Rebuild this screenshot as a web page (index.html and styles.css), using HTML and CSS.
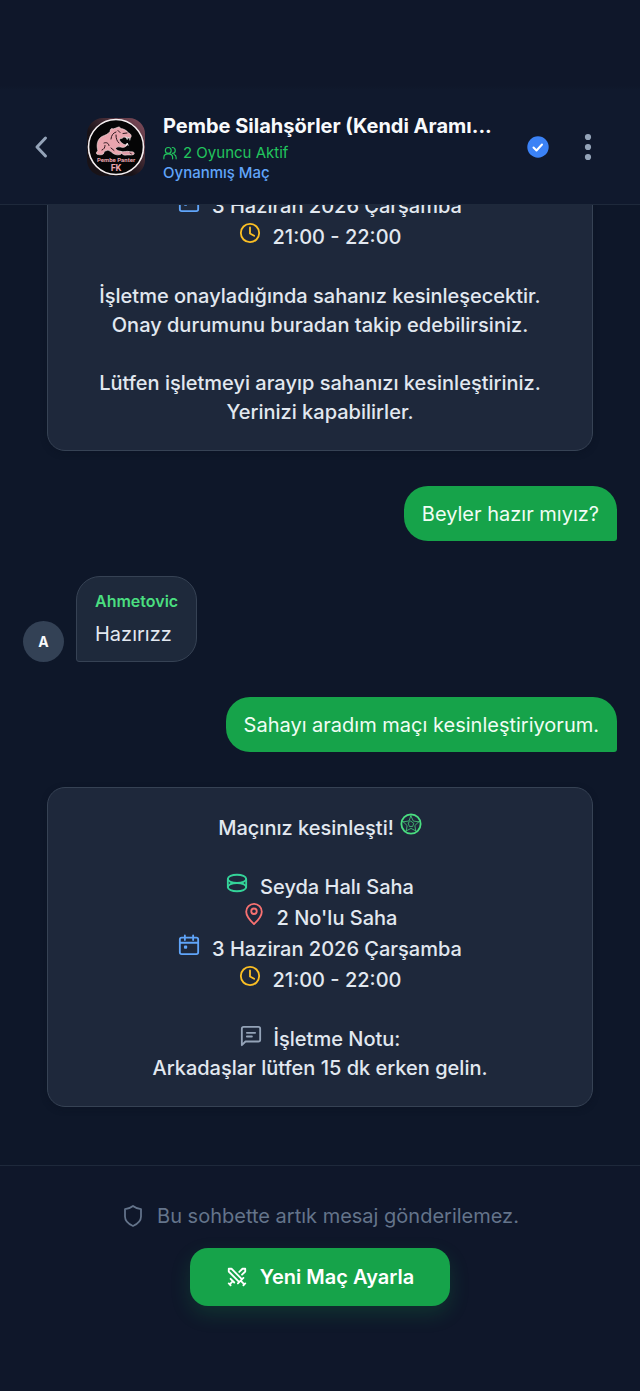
FILE: index.html
```html
<!DOCTYPE html>
<html lang="tr">
<head>
<meta charset="utf-8">
<meta name="viewport" content="width=device-width, initial-scale=1">
<title>Pembe Silahşörler</title>
<link rel="stylesheet" href="styles.css">
</head>
<body>
<svg class="sprite" aria-hidden="true">
  <symbol id="calendar" viewBox="0 0 24 24"><rect x="2" y="4" width="20" height="18" rx="2"/><path d="M2 9.500h20M7.500 1.500v5M16.500 1.500v5"/><rect x="7.500" y="13.500" width="1.500" height="1.500"/></symbol>
  <symbol id="clock" viewBox="0 0 24 24"><circle cx="12" cy="12" r="10"/><path d="M12 6v6.500l4.500 2.500"/></symbol>
  <symbol id="stadium" viewBox="0 0 24 24"><ellipse cx="12" cy="7.500" rx="10" ry="4.500"/><ellipse cx="12" cy="16.500" rx="10" ry="4.500"/><path d="M2 7.500v9M22 7.500v9"/></symbol>
  <symbol id="pin" viewBox="0 0 24 24"><path d="M20.500 9.500c0 5.500-8.500 13.500-8.500 13.500S3.500 15 3.500 9.500a8.500 8.500 0 0 1 17 0z"/><circle cx="12" cy="9" r="3"/></symbol>
  <symbol id="note" viewBox="0 0 24 24"><path d="M2 22V4a2 2 0 0 1 2-2h16a2 2 0 0 1 2 2v12a2 2 0 0 1-2 2H6zM7.500 8.500h9M7.500 12.500h5.500"/></symbol>
</svg>
<div class="app">
  <header class="header">
    <button class="icon-button" type="button" aria-label="Geri">
      <svg class="back" viewBox="0 0 14 24"><path d="M11.500 3L3 12l8.500 9"/></svg>
    </button>
    <svg class="logo" viewBox="0 0 58 58" role="img" aria-label="Pembe Panter FK">
      <defs><linearGradient id="plate" x1="0" y1="1" x2="1" y2="0"><stop offset=".4" stop-color="#181217"/><stop offset="1" stop-color="#875060"/></linearGradient></defs>
      <rect width="58" height="58" fill="url(#plate)"/>
      <circle cx="29" cy="29" r="27.500" fill="#050506" stroke="#f5eff1" stroke-width="1.600"/>
      <path d="M10 36c-1.200-1-.5-2.500 1-3-2-6-.5-12 4-14.500 3-1.500 6-2 8-5 .2-2.500 1.500-3.500 3-2.500 2-1 4-1 5.500-2 1.200-.2 2 .6 2 1.600 3 .2 6 1.500 8 4.400 2 .5 3 2 2.600 3.800-.4 1.200-1.300 1.600-2.300 1.300l-5-1.100c-1.500 1.500-3 2-4.500 1.500 0 3 2 4 4 5.500 1.500.8 3 .8 4.500.2-1.500 2.800-4.300 3.800-7.300 2.800-2.500-.5-4 .3-5 1.500 1 1.500 2.500 2.300 4 2.500 2.500.3 3 3 .5 3.600-3.500.8-6.500-.3-9-3l-3-1.500-3.500 1.200-1.200 2.700c-2 1.200-4.800 1-6.300 0z" fill="#e9a5ae" stroke="#f5e9ea" stroke-width=".6"/>
      <path d="M39 19l1.200 2.500 1-2M43 20l-.2 2M39 27.500l1.200-2.500 1 2.300" fill="none" stroke="#fff" stroke-width=".8"/>
      <path d="M17 25c2.500-1 4.500 0 5 2.500M15 32c2-.8 3-2.300 3-4.500M24 21c.5-4 2-6 5-7M31 12.500l2 2M36 15.500l4-.5M29 17c0 4 1 6 3 8M24 30l3 2.500" fill="none" stroke="#2b171d" stroke-width="1"/>
      <path d="M34 33.500c3 1 6-1 9 .3 3.500-.5 5.200 1 3.700 2.700-2.500 1-5.300 0-7.500.6-2.700.3-4.900-.8-5.200-3.600z" fill="#df9ba6" stroke="#f5e9ea" stroke-width=".6"/>
      <path d="M43 35l1.500 1" stroke="#26151b" stroke-width=".8"/>
      <text class="logo-name" x="29" y="44" text-anchor="middle">Pembe Panter</text>
      <text class="logo-fk" x="29" y="53" text-anchor="middle">FK</text>
    </svg>
    <div class="heading">
      <h1 class="title">Pembe Silahşörler (Kendi Aramı...</h1>
      <p class="active"><svg class="users" viewBox="0 0 24 24"><circle cx="9" cy="7.500" r="5"/><path d="M1.500 22v-2.500c0-4 3-6 7.500-6s7.500 2 7.500 6V22M16 2.500a5 5 0 0 1 0 10M19 14.500c2.500 1 3.500 2.800 3.500 5V22"/></svg>2 Oyuncu Aktif</p>
      <p class="played">Oynanmış Maç</p>
    </div>
    <svg class="badge" viewBox="0 0 22 22" role="img" aria-label="Onaylı"><circle cx="11" cy="11" r="10.700"/><path d="M6.500 11.500l3 3 5.500-6"/></svg>
    <button class="icon-button" type="button" aria-label="Menü">
      <svg class="dots" viewBox="0 0 8 28"><circle cx="4" cy="4" r="3.100"/><circle cx="4" cy="14" r="3.100"/><circle cx="4" cy="24" r="3.100"/></svg>
    </button>
  </header>

  <main class="chat">
    <section class="card">
      <div class="group">
        <p class="row"><svg class="icon blue"><use href="#calendar"/></svg>3 Haziran 2026 Çarşamba</p>
        <p class="row"><svg class="icon yellow"><use href="#clock"/></svg>21:00 - 22:00</p>
      </div>
      <p>İşletme onayladığında sahanız kesinleşecektir.<br>Onay durumunu buradan takip edebilirsiniz.</p>
      <p>Lütfen işletmeyi arayıp sahanızı kesinleştiriniz.<br>Yerinizi kapabilirler.</p>
    </section>

    <p class="bubble sent">Beyler hazır mıyız?</p>

    <div class="received">
      <span class="avatar">A</span>
      <div class="bubble incoming">
        <p class="sender">Ahmetovic</p>
        <p>Hazırızz</p>
      </div>
    </div>

    <p class="bubble sent">Sahayı aradım maçı kesinleştiriyorum.</p>

    <section class="card">
      <p class="row confirmed">Maçınız kesinleşti!
        <svg class="icon green" viewBox="0 0 24 24"><circle cx="12" cy="12" r="10.500"/><path class="seams" d="M12 3.500l2.600 5.300 5.900.8-4.300 4.100 1 5.800-5.200-2.700-5.200 2.700 1-5.800L3.500 9.600l5.900-.8z"/><path class="seams" d="M12 9l3 2.200-1.200 3.500h-3.600L9 11.200zM12 1.500v2M22 9l-1.500.6M18.500 20.500l-1.300-1M5.500 20.500l1.300-1M2 9l1.500.6"/></svg>
      </p>
      <div class="group">
        <p class="row"><svg class="icon emerald"><use href="#stadium"/></svg>Seyda Halı Saha</p>
        <p class="row"><svg class="icon red"><use href="#pin"/></svg>2 No'lu Saha</p>
        <p class="row"><svg class="icon blue"><use href="#calendar"/></svg>3 Haziran 2026 Çarşamba</p>
        <p class="row"><svg class="icon yellow"><use href="#clock"/></svg>21:00 - 22:00</p>
      </div>
      <div>
        <p class="row note"><svg class="icon gray"><use href="#note"/></svg>İşletme Notu:</p>
        <p>Arkadaşlar lütfen 15 dk erken gelin.</p>
      </div>
    </section>
  </main>

  <footer class="footer">
    <p class="closed"><svg class="shield" viewBox="0 0 24 24"><path d="M12 2c2.500 2 5 3 8 3v7.500c0 5-3.500 7.500-8 9.500-4.500-2-8-4.500-8-9.500V5c3 0 5.500-1 8-3z"/></svg>Bu sohbette artık mesaj gönderilemez.</p>
    <button class="primary" type="button"><svg class="swords" viewBox="0 0 24 24"><path d="M14.500 17.500L3 6V3h3l11.500 11.500M13 19l6-6M16 16l4 4M19 21l2-2M14.500 6.500L18 3h3v3l-3.500 3.500M5 14l4 4M7 17l-3 3M3 19l2 2"/></svg>Yeni Maç Ayarla</button>
  </footer>
</div>
</body>
</html>
```
FILE: styles.css
```css
* { box-sizing: border-box; }
body, h1, p { margin: 0; }
body {
  background: #0e1729;
  color: #e2e8f0;
  font: 20px/29px Inter, "Noto Sans", sans-serif;
}
button { font: inherit; border: 0; cursor: pointer; }
svg { flex: none; fill: none; stroke: currentColor; stroke-width: 2; stroke-linecap: round; stroke-linejoin: round; }
.sprite { display: none; }
.app { display: flex; flex-direction: column; height: 100vh; }

.header {
  display: flex;
  align-items: center;
  flex: none;
  padding: 111px 29px 21px 18px;
  background: linear-gradient(#0f172a 86px, #10192d 90px);
  border-bottom: 1px solid #1e293b;
}
.icon-button { display: flex; justify-content: center; width: 46px; padding: 8px 0; background: none; color: #94a3b8; }
.back { width: 14px; height: 24px; stroke-width: 3; }
.dots { width: 8px; height: 28px; fill: currentColor; stroke: none; }
.logo { width: 58px; height: 58px; margin: 0 18px 0 23px; border-radius: 16px; stroke: none; }
.logo-name, .logo-fk { font-family: Roboto, sans-serif; font-weight: 700; fill: #e9a5ae; }
.logo-name { font-size: 6px; }
.logo-fk { font-size: 9px; }
.heading { flex: 1; min-width: 0; }
.title { overflow: hidden; margin-bottom: 2px; color: #f8fafc; font-size: 20px; line-height: 30px; font-weight: 700; white-space: nowrap; }
.active, .played { font-size: 15px; line-height: 20px; }
.active { display: flex; align-items: center; gap: 6px; color: #22c55e; }
.played { color: #60a5fa; font-weight: 500; }
.users { width: 14px; height: 14px; }
.badge { width: 22px; height: 22px; margin: 0 16px; }
.badge circle { fill: #3b82f6; stroke: none; }
.badge path { stroke: #fff; }

.chat {
  display: flex;
  flex: 1;
  flex-direction: column;
  justify-content: flex-end;
  gap: 35px;
  min-height: 0;
  overflow: hidden;
  padding: 0 23px 58px;
}
.card {
  display: flex;
  flex: none;
  flex-direction: column;
  gap: 29px;
  margin: 0 24px;
  padding: 25px 24px 23px;
  border: 1px solid #364254;
  border-radius: 18px;
  background: #1e283b;
  box-shadow: 0 2px 6px #0b122066;
  font-weight: 500;
  text-align: center;
}
.row { display: flex; justify-content: center; gap: 12px; line-height: 31px; }
.row.confirmed { gap: 6px; line-height: 30px; }
.row.note { line-height: 29px; }
.icon { width: 22px; height: 22px; stroke-width: 2; }
.seams { stroke-width: 1; opacity: .8; }
.blue { color: #60a5fa; }
.yellow { color: #fbbf24; }
.green { color: #4ade80; }
.emerald { color: #34d399; }
.red { color: #f87171; }
.gray { color: #94a3b8; }

.bubble { flex: none; padding: 14px 18px 12px; border-radius: 24px; }
.sent { align-self: flex-end; border-bottom-right-radius: 3px; background: #16a34a; color: #f0fdf4; }
.received { display: flex; flex: none; align-items: flex-end; gap: 12px; }
.incoming { padding-top: 13px; border: 1px solid #364254; border-bottom-left-radius: 3px; background: #1e293b; }
.sender { margin-bottom: 8px; color: #4ade80; font-size: 16px; line-height: 22px; font-weight: 600; }
.avatar { display: grid; place-items: center; width: 41px; height: 41px; border-radius: 50%; background: #334155; color: #f8fafc; font-size: 14px; font-weight: 700; }

.footer {
  display: flex;
  flex: none;
  flex-direction: column;
  align-items: center;
  gap: 17px;
  padding: 35px 20px 85px;
  border-top: 1px solid #1e293b;
  background: #0f172a;
}
.closed { display: flex; align-items: center; gap: 12px; color: #64748b; line-height: 30px; }
.shield { width: 24px; height: 24px; stroke-width: 1.75; }
.primary {
  display: flex;
  align-items: center;
  gap: 12px;
  padding: 14px 36px;
  border-radius: 18px;
  background: #16a34a;
  box-shadow: 0 8px 20px #16a34a33;
  color: #fff;
  line-height: 30px;
  font-weight: 600;
}
.swords { width: 22px; height: 22px; }
```
